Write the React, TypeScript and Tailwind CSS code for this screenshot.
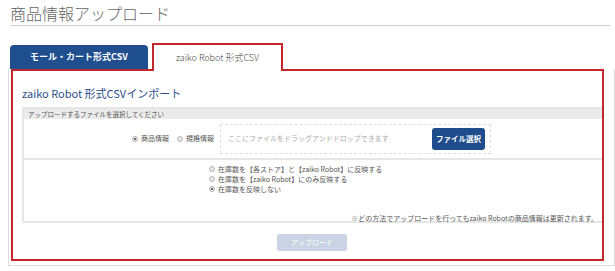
import React from "react";

function Radio({ checked }: { checked?: boolean }) {
  return (
    <span className="inline-flex items-center justify-center w-[6px] h-[6px] rounded-full border border-[#b5b5b5] bg-[#e8e8e8] shrink-0">
      {checked && <span className="w-[2px] h-[2px] rounded-full bg-[#444]" />}
    </span>
  );
}

export default function App() {
  return (
    <div className="w-[615px] h-[271px] bg-white overflow-hidden font-['Noto_Sans_CJK_JP',sans-serif] text-[#555]">
      <div className="px-[10px] pt-[3px]">
        <h1 className="text-[16px] leading-[21px] font-light text-[#666] border-b border-[#cfcfcf] pb-[1px] w-[600px]">
          商品情報アップロード
        </h1>
      </div>

      <div className="flex items-end ml-[10px] mt-[17px] gap-[4px] relative z-10">
        <div className="w-[138px] h-[24px] rounded-t-[4px] bg-[#1f4f8f] text-white font-bold text-[9px] flex items-center justify-center">
          モール・カート形式CSV
        </div>
        <div className="w-[131px] h-[28px] mb-[-2px] border-2 border-b-0 border-[#c1272d] bg-white text-[#444] font-light text-[9px] flex items-center justify-center">
          zaiko Robot 形式CSV
        </div>
      </div>

      <div className="ml-[8px] w-[607px] border border-t-0 border-[#dcdcdc] pl-[1px] pb-[4px]">
        <div className="ml-[1px] w-[593px] h-[192px] border-2 border-[#c1272d] pl-[9px] pt-[14px]">
          <div className="text-[11px] leading-[16px] text-[#2b4f8a]">zaiko Robot 形式CSVインポート</div>

          <div className="mt-[6px] border-2 border-[#e6e6e6] border-r-0">
            <div className="bg-[#ebebeb] h-[10px] text-[6.5px] leading-[10px] pl-[4px] text-[#555]">
              アップロードするファイルを選択してください
            </div>
            <div className="flex items-center h-[41px] border-b-2 border-[#e6e6e6] pl-[108px]">
              <div className="flex items-center gap-[2px] text-[7px]">
                <Radio checked />
                <span className="ml-[1px]">商品情報</span>
                <span className="w-[4px]" />
                <Radio />
                <span className="ml-[1px]">規格情報</span>
              </div>
              <div className="ml-[6px] w-[271px] h-[30px] border border-dashed border-[#ddd] flex items-center justify-between pl-[7px] pr-[5px]">
                <span className="text-[7px] text-[#aaa]">ここにファイルをドラッグアンドドロップできます</span>
                <span className="w-[53px] h-[22px] rounded-[3px] bg-[#1e4c8c] text-white font-bold text-[7.5px] flex items-center justify-center">
                  ファイル選択
                </span>
              </div>
            </div>
            <div className="h-[61px] pt-[4px] pl-[185px] text-[7px] leading-[10px] text-[#555]">
              <div className="flex items-center gap-[3px]"><Radio /><span>在庫数を【各ストア】と【zaiko Robot】に反映する</span></div>
              <div className="flex items-center gap-[3px]"><Radio /><span>在庫数を【zaiko Robot】にのみ反映する</span></div>
              <div className="flex items-center gap-[3px]"><Radio checked /><span>在庫数を反映しない</span></div>
              <div className="text-right pr-[4px] mt-[19px] text-[7px] text-[#555]">
                <span className="text-[#888] [font-variant-emoji:text] font-['Noto_Sans_CJK_JP','DejaVu_Sans',sans-serif]">※</span>どの方法でアップロードを行ってもzaiko Robotの商品情報は更新されます。
              </div>
            </div>
          </div>

          <div className="flex justify-center mt-[11px]">
            <span className="w-[70px] h-[17px] rounded-[3px] bg-[#c9d3e3] text-white text-[7px] flex items-center justify-center">
              アップロード
            </span>
          </div>
        </div>
      </div>
    </div>
  );
}
